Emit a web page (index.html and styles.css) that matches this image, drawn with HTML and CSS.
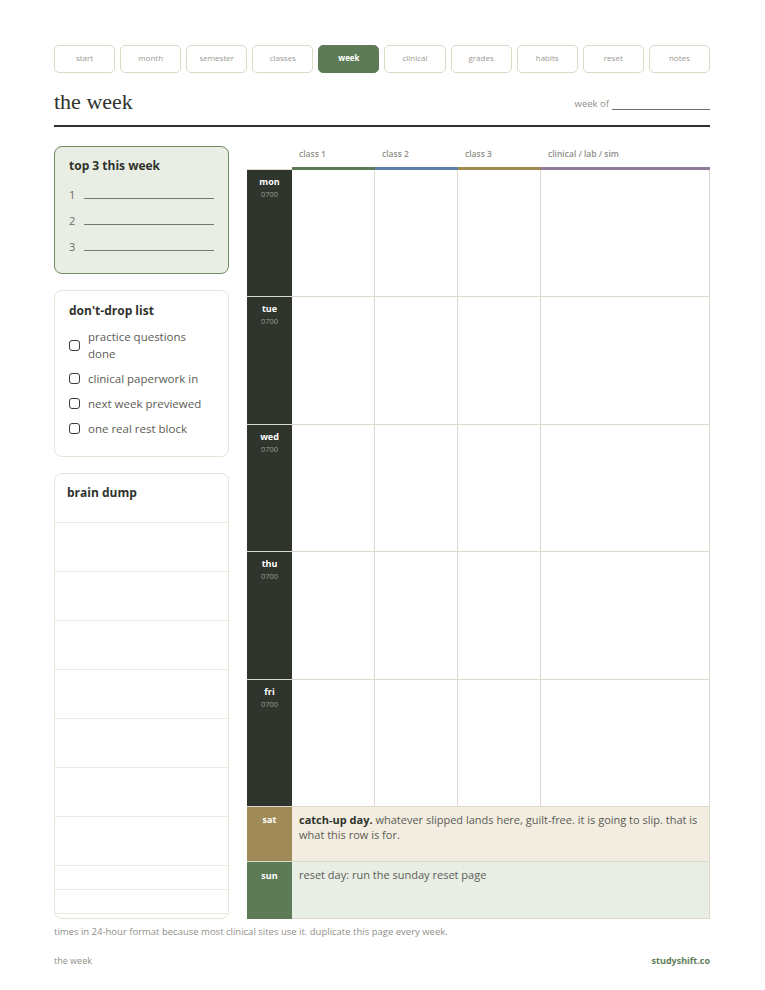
FILE: index.html
```html
<!DOCTYPE html>
<html>
<head>
<meta charset="utf-8">
<link rel="stylesheet" href="styles.css">
</head>
<body>
<div class="page">
  <nav class="tabs">
    <div class="tab">start</div>
    <div class="tab">month</div>
    <div class="tab">semester</div>
    <div class="tab">classes</div>
    <div class="tab active">week</div>
    <div class="tab">clinical</div>
    <div class="tab">grades</div>
    <div class="tab">habits</div>
    <div class="tab">reset</div>
    <div class="tab">notes</div>
  </nav>

  <header class="head">
    <h1 class="title">the week</h1>
    <div class="weekof">week of <span class="blank"></span></div>
  </header>

  <main class="main">
    <aside class="side">
      <section class="box top3">
        <h2 class="box-title">top 3 this week</h2>
        <div class="num-row"><span class="num">1</span><span class="num-line"></span></div>
        <div class="num-row"><span class="num">2</span><span class="num-line"></span></div>
        <div class="num-row"><span class="num">3</span><span class="num-line"></span></div>
      </section>

      <section class="box drop">
        <h2 class="box-title">don't-drop list</h2>
        <ul class="checks">
          <li class="check"><span class="cb"></span><span>practice questions done</span></li>
          <li class="check"><span class="cb"></span><span>clinical paperwork in</span></li>
          <li class="check"><span class="cb"></span><span>next week previewed</span></li>
          <li class="check"><span class="cb"></span><span>one real rest block</span></li>
        </ul>
      </section>

      <section class="box dump">
        <h2 class="box-title dump-title">brain dump</h2>
        <div class="dline"></div>
        <div class="dline"></div>
        <div class="dline"></div>
        <div class="dline"></div>
        <div class="dline"></div>
        <div class="dline"></div>
        <div class="dline"></div>
        <div class="dline short"></div>
        <div class="dline short"></div>
        <div class="dline rest"></div>
      </section>
    </aside>

    <section class="grid">
      <div class="hcell corner"></div>
      <div class="hcell c1">class 1</div>
      <div class="hcell c2">class 2</div>
      <div class="hcell c3">class 3</div>
      <div class="hcell c4">clinical / lab / sim</div>

      <div class="day"><b>mon</b><span>0700</span></div>
      <div class="cell"></div><div class="cell"></div><div class="cell"></div><div class="cell"></div>

      <div class="day"><b>tue</b><span>0700</span></div>
      <div class="cell"></div><div class="cell"></div><div class="cell"></div><div class="cell"></div>

      <div class="day"><b>wed</b><span>0700</span></div>
      <div class="cell"></div><div class="cell"></div><div class="cell"></div><div class="cell"></div>

      <div class="day"><b>thu</b><span>0700</span></div>
      <div class="cell"></div><div class="cell"></div><div class="cell"></div><div class="cell"></div>

      <div class="day"><b>fri</b><span>0700</span></div>
      <div class="cell"></div><div class="cell"></div><div class="cell"></div><div class="cell"></div>

      <div class="day sat"><b>sat</b></div>
      <div class="wide sat-row"><p class="wide-text"><b>catch-up day.</b> whatever slipped lands here, guilt-free. it is going to slip. that is what this row is for.</p></div>

      <div class="day sun"><b>sun</b></div>
      <div class="wide sun-row"><p class="wide-text">reset day: run the sunday reset page</p></div>
    </section>
  </main>

  <p class="note">times in 24-hour format because most clinical sites use it. duplicate this page every week.</p>

  <footer class="foot">
    <span>the week</span>
    <span class="brand">studyshift.co</span>
  </footer>
</div>
</body>
</html>
```

FILE: styles.css
```css
* { box-sizing: border-box; }

body {
  margin: 0;
  background: #ffffff;
  font-family: "Open Sans", Lato, "Liberation Sans", sans-serif;
  color: #2f332d;
}

.page {
  width: 765px;
  padding: 45px 55px 0 54px;
}

/* tabs */
.tabs {
  display: flex;
  gap: 5px;
}
.tab {
  flex: 1;
  height: 28px;
  border: 1px solid #ddd9c9;
  border-radius: 5px;
  font-size: 8px;
  color: #9a9a92;
  display: flex;
  align-items: center;
  justify-content: center;
  padding-bottom: 3px;
}
.tab.active {
  background: #5e7b57;
  border-color: #5e7b57;
  color: #ffffff;
  font-weight: 700;
}

/* header */
.head {
  display: flex;
  justify-content: space-between;
  align-items: flex-end;
  margin-top: 17px;
  height: 37px;
  padding-bottom: 6px;
  border-bottom: 2px solid #2f332d;
}
.title {
  margin: 0;
  font-family: "Liberation Serif", "DejaVu Serif", serif;
  font-weight: 400;
  font-size: 22px;
  line-height: 22px;
  color: #2f332d;
  position: relative;
  top: -6px;
}
.weekof {
  font-size: 9.5px;
  color: #8f8f88;
  display: flex;
  align-items: flex-end;
  gap: 3px;
  position: relative;
  top: -9px;
}
.blank {
  display: inline-block;
  width: 98px;
  border-bottom: 1px solid #6f6f68;
  height: 9px;
}

/* main */
.main {
  display: flex;
  gap: 18px;
  margin-top: 19px;
  height: 773px;
}
.side {
  width: 175px;
  display: flex;
  flex-direction: column;
  gap: 16px;
}
.box {
  border: 1px solid #e7e3d6;
  border-radius: 8px;
  padding: 12px 14px 12px 14px;
}
.box-title {
  margin: 0;
  font-size: 12px;
  font-weight: 700;
  color: #2f332d;
  line-height: 16px;
}

.top3 {
  background: #e8eee4;
  border-color: #71895f;
  height: 128px;
  padding-top: 11px;
}
.num-row {
  display: flex;
  align-items: flex-end;
  gap: 9px;
  height: 26px;
}
.top3 .box-title { margin-bottom: 2px; }
.num {
  font-size: 11px;
  color: #6a6a64;
  width: 6px;
  line-height: 12px;
  padding-bottom: 1px;
}
.num-line {
  display: block;
  width: 130px;
  border-bottom: 1px solid #6f7d68;
  margin-bottom: 3px;
}

.drop {
  height: 167px;
  padding-top: 12px;
}
.checks {
  list-style: none;
  margin: 9px 0 0 0;
  padding: 0;
  display: flex;
  flex-direction: column;
  gap: 8px;
}
.check {
  display: flex;
  align-items: center;
  gap: 8px;
  font-size: 11.5px;
  line-height: 17px;
  color: #5c5c56;
}
.cb {
  flex: none;
  width: 11px;
  height: 11px;
  border: 1.3px solid #3a3d37;
  border-radius: 3px;
}

.dump {
  flex: 1;
  padding: 0;
  display: flex;
  flex-direction: column;
}
.dump-title {
  height: 48px;
  padding: 11px 0 0 12px;
  flex: none;
}
.dline {
  height: 49px;
  border-top: 1px solid #eeeae0;
  flex: none;
}
.dline.short { height: 24px; }
.dline.rest { flex: 1; height: auto; }

/* grid */
.grid {
  flex: 1;
  display: grid;
  grid-template-columns: 45px 83px 83px 83px 1fr;
  grid-template-rows: 24px repeat(5, 1fr) 55px 57px;
}
.hcell {
  font-size: 8.5px;
  font-weight: 600;
  color: #8f8f88;
  padding: 2px 0 0 7px;
  border-bottom: 3px solid transparent;
}
.hcell.corner { border-bottom: 1px solid #dcd9cc; }
.c1 { border-bottom-color: #5e7b57; }
.c2 { border-bottom-color: #5a7ea5; }
.c3 { border-bottom-color: #a08a4e; }
.c4 { border-bottom-color: #8e7b98; }

.day {
  background: #2f342d;
  border-bottom: 1px solid #dcd9cc;
  display: flex;
  flex-direction: column;
  align-items: center;
  padding-top: 6px;
  color: #ffffff;
}
.day b {
  font-size: 9px;
  font-weight: 700;
  line-height: 12px;
}
.day span {
  font-size: 7.5px;
  color: #9a9d95;
  line-height: 12px;
}
.day.sat { background: #a08a58; padding-top: 7px; }
.day.sun { background: #5e7b57; padding-top: 8px; border-bottom: none; }

.cell {
  border-right: 1px solid #dcd9cc;
  border-bottom: 1px solid #dcd9cc;
}

.wide {
  grid-column: 2 / 6;
  border-right: 1px solid #dcd9cc;
  border-bottom: 1px solid #dcd9cc;
  padding: 5px 10px 0 7px;
}
.wide-text {
  margin: 0;
  font-size: 11px;
  line-height: 15px;
  color: #5c5c56;
}
.wide-text b { color: #2f332d; font-weight: 700; }
.sat-row { background: #f2ede0; }
.sun-row { background: #e8eee4; }

.note {
  margin: 6px 0 0 0;
  font-size: 9.5px;
  color: #8f8f88;
}
.foot {
  display: flex;
  justify-content: space-between;
  margin-top: 16px;
  font-size: 9px;
  color: #8f8f88;
}
.brand {
  color: #5e7b57;
  font-weight: 700;
}
```
